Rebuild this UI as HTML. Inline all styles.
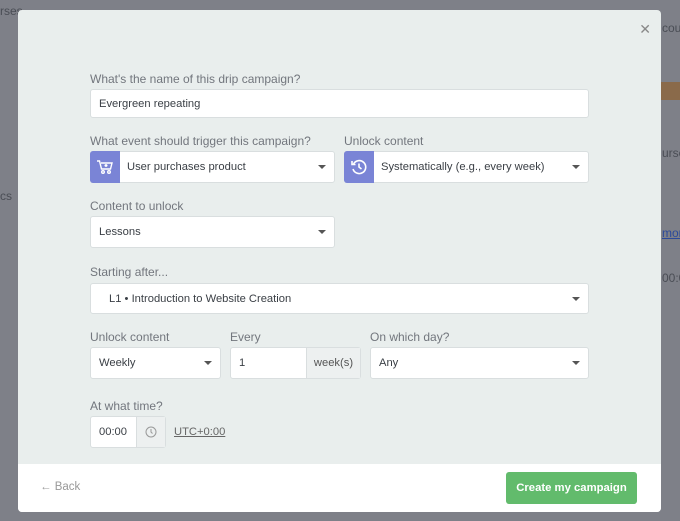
<!DOCTYPE html>
<html><head><style>
*{box-sizing:border-box;margin:0;padding:0}
body{width:680px;height:521px;overflow:hidden;background:#7e8088;font-family:"Liberation Sans",sans-serif;position:relative;color:#3a3f45}
.bg{position:absolute;color:#4a4d55;font-size:12px}
.modal{position:absolute;left:18px;top:10px;width:643px;height:502px;background:#e9eeed;border-radius:4px;overflow:hidden}
.foot{position:absolute;left:0;right:0;bottom:0;height:48px;background:#fff}
.lbl{position:absolute;font-size:12px;color:#72767d}
.f{position:absolute;background:#fff;border:1px solid #d9dedf;border-radius:3px;font-size:11.2px;color:#3a3f45;display:flex;align-items:center;padding-left:8px}
.car{position:absolute;right:8px;top:50%;margin-top:-2px;border-left:4px solid transparent;border-right:4px solid transparent;border-top:4px solid #555}
.ic{position:absolute;left:-1px;top:-1px;bottom:-1px;width:30px;background:#7a84d6;border-radius:3px 0 0 3px;display:flex;align-items:center;justify-content:center}
.add{position:absolute;top:0;bottom:0;right:0;background:#edf0f0;border-left:1px solid #d9dedf;display:flex;align-items:center;justify-content:center;font-size:11.2px;color:#555}
</style></head><body>
<div class="bg" style="left:0;top:4px">rses</div>
<div class="bg" style="left:0;top:189px">cs</div>
<div class="bg" style="left:662px;top:21px">cou</div>
<div style="position:absolute;left:661px;top:82px;width:19px;height:18px;background:#8a6a4a"></div>
<div class="bg" style="left:662px;top:146px">urse</div>
<div class="bg" style="left:662px;top:226px;color:#2c4a9a;text-decoration:underline">more</div>
<div class="bg" style="left:662px;top:271px">00:0</div>
<div class="modal">
<div style="position:absolute;right:10px;top:11px;font-size:14px;color:#888">✕</div>
<div class="lbl" style="left:72px;top:62px">What's the name of this drip campaign?</div>
<div class="f" style="left:72px;top:79px;width:499px;height:29px">Evergreen repeating</div>
<div class="lbl" style="left:72px;top:124px">What event should trigger this campaign?</div>
<div class="f" style="left:72px;top:141px;width:245px;height:32px;padding-left:36px"><div class="ic"><svg width="18" height="16" viewBox="0 0 18 16" fill="none" stroke="#fff" stroke-width="1.4"><path d="M1 2h2.5l2 8h9l1.5-6H5"/><circle cx="7" cy="13" r="1.3"/><circle cx="13" cy="13" r="1.3"/><path d="M10 5v3M8.5 6.5h3"/></svg></div>User purchases product<div class="car"></div></div>
<div class="lbl" style="left:326px;top:124px">Unlock content</div>
<div class="f" style="left:326px;top:141px;width:245px;height:32px;padding-left:36px"><div class="ic"><svg width="18" height="18" viewBox="0 0 18 18" fill="none" stroke="#fff" stroke-width="1.6"><path d="M3.5 6A6.5 6.5 0 1 1 3 11"/><path d="M2 3v3.5h3.5"/><path d="M9 5.5V9l2.5 2"/></svg></div>Systematically (e.g., every week)<div class="car"></div></div>
<div class="lbl" style="left:72px;top:189px">Content to unlock</div>
<div class="f" style="left:72px;top:206px;width:245px;height:32px">Lessons<div class="car"></div></div>
<div class="lbl" style="left:72px;top:255px">Starting after...</div>
<div class="f" style="left:72px;top:273px;width:499px;height:31px;padding-left:18px">L1 • Introduction to Website Creation<div class="car"></div></div>
<div class="lbl" style="left:72px;top:320px">Unlock content</div>
<div class="f" style="left:72px;top:337px;width:131px;height:32px">Weekly<div class="car"></div></div>
<div class="lbl" style="left:212px;top:320px">Every</div>
<div class="f" style="left:212px;top:337px;width:131px;height:32px">1<div class="add" style="width:54px">week(s)</div></div>
<div class="lbl" style="left:352px;top:320px">On which day?</div>
<div class="f" style="left:352px;top:337px;width:219px;height:32px">Any<div class="car"></div></div>
<div class="lbl" style="left:72px;top:389px">At what time?</div>
<div class="f" style="left:72px;top:406px;width:76px;height:32px">00:00<div class="add" style="width:29px"><svg width="12" height="12" viewBox="0 0 12 12" fill="none" stroke="#999" stroke-width="1"><circle cx="6" cy="6" r="5"/><path d="M6 3v3l1.5 1.5"/></svg></div></div>
<div style="position:absolute;left:156px;top:416px;font-size:11.2px;color:#666;text-decoration:underline">UTC+0:00</div>
<div class="foot">
<div style="position:absolute;left:22px;top:17px;font-size:11.5px;color:#999">← Back</div>
<div style="position:absolute;left:488px;top:8px;width:131px;height:32px;background:#62bb6c;border-radius:3px;color:#fff;font-weight:bold;font-size:11.3px;display:flex;align-items:center;justify-content:center">Create my campaign</div>
</div>
</div>
</body></html>
